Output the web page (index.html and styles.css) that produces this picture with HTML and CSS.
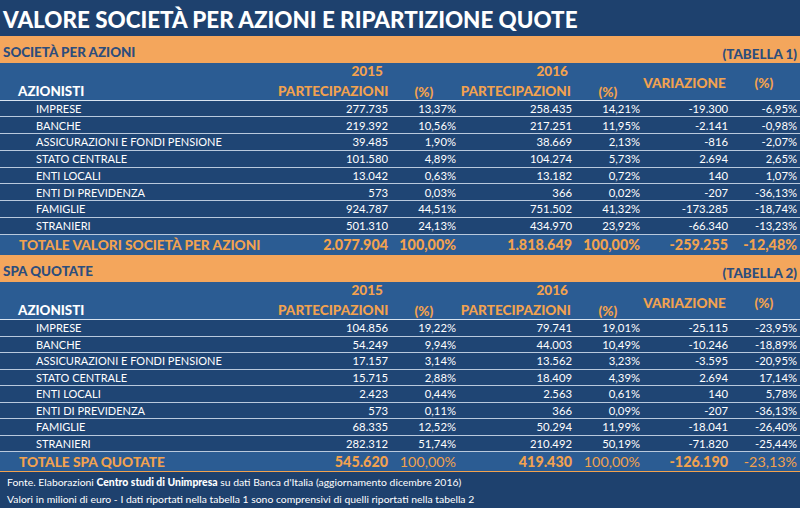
FILE: index.html
```html
<!DOCTYPE html>
<html lang="it">
<head>
<meta charset="utf-8">
<title>Valore società per azioni e ripartizione quote</title>
<link rel="stylesheet" href="styles.css">
</head>
<body>
<div class="page">
  <h1 class="title">VALORE SOCIETÀ PER AZIONI E RIPARTIZIONE QUOTE</h1>

  <div class="band"><span class="band-l">SOCIETÀ PER AZIONI</span><span class="band-r">(TABELLA 1)</span></div>
  <div class="head">
    <div class="h-az">AZIONISTI</div>
    <div class="h-year y1">2015</div>
    <div class="h-part p1">PARTECIPAZIONI</div>
    <div class="h-pct c1">(%)</div>
    <div class="h-year y2">2016</div>
    <div class="h-part p2">PARTECIPAZIONI</div>
    <div class="h-pct c2">(%)</div>
    <div class="h-var">VARIAZIONE</div>
    <div class="h-pct c3">(%)</div>
  </div>
  <div class="rows t1">
    <div class="row"><span class="lab">IMPRESE</span><span>277.735</span><span>13,37%</span><span>258.435</span><span>14,21%</span><span>-19.300</span><span>-6,95%</span></div>
    <div class="row"><span class="lab">BANCHE</span><span>219.392</span><span>10,56%</span><span>217.251</span><span>11,95%</span><span>-2.141</span><span>-0,98%</span></div>
    <div class="row"><span class="lab">ASSICURAZIONI E FONDI PENSIONE</span><span>39.485</span><span>1,90%</span><span>38.669</span><span>2,13%</span><span>-816</span><span>-2,07%</span></div>
    <div class="row"><span class="lab">STATO CENTRALE</span><span>101.580</span><span>4,89%</span><span>104.274</span><span>5,73%</span><span>2.694</span><span>2,65%</span></div>
    <div class="row"><span class="lab">ENTI LOCALI</span><span>13.042</span><span>0,63%</span><span>13.182</span><span>0,72%</span><span>140</span><span>1,07%</span></div>
    <div class="row"><span class="lab">ENTI DI PREVIDENZA</span><span>573</span><span>0,03%</span><span>366</span><span>0,02%</span><span>-207</span><span>-36,13%</span></div>
    <div class="row"><span class="lab">FAMIGLIE</span><span>924.787</span><span>44,51%</span><span>751.502</span><span>41,32%</span><span>-173.285</span><span>-18,74%</span></div>
    <div class="row"><span class="lab">STRANIERI</span><span>501.310</span><span>24,13%</span><span>434.970</span><span>23,92%</span><span>-66.340</span><span>-13,23%</span></div>
  </div>
  <div class="total t1tot"><span class="lab">TOTALE VALORI SOCIETÀ PER AZIONI</span><span>2.077.904</span><span>100,00%</span><span>1.818.649</span><span>100,00%</span><span>-259.255</span><span>-12,48%</span></div>

  <div class="band band2"><span class="band-l">SPA QUOTATE</span><span class="band-r">(TABELLA 2)</span></div>
  <div class="head">
    <div class="h-az">AZIONISTI</div>
    <div class="h-year y1">2015</div>
    <div class="h-part p1">PARTECIPAZIONI</div>
    <div class="h-pct c1">(%)</div>
    <div class="h-year y2">2016</div>
    <div class="h-part p2">PARTECIPAZIONI</div>
    <div class="h-pct c2">(%)</div>
    <div class="h-var">VARIAZIONE</div>
    <div class="h-pct c3">(%)</div>
  </div>
  <div class="rows t2">
    <div class="row"><span class="lab">IMPRESE</span><span>104.856</span><span>19,22%</span><span>79.741</span><span>19,01%</span><span>-25.115</span><span>-23,95%</span></div>
    <div class="row"><span class="lab">BANCHE</span><span>54.249</span><span>9,94%</span><span>44.003</span><span>10,49%</span><span>-10.246</span><span>-18,89%</span></div>
    <div class="row"><span class="lab">ASSICURAZIONI E FONDI PENSIONE</span><span>17.157</span><span>3,14%</span><span>13.562</span><span>3,23%</span><span>-3.595</span><span>-20,95%</span></div>
    <div class="row"><span class="lab">STATO CENTRALE</span><span>15.715</span><span>2,88%</span><span>18.409</span><span>4,39%</span><span>2.694</span><span>17,14%</span></div>
    <div class="row"><span class="lab">ENTI LOCALI</span><span>2.423</span><span>0,44%</span><span>2.563</span><span>0,61%</span><span>140</span><span>5,78%</span></div>
    <div class="row"><span class="lab">ENTI DI PREVIDENZA</span><span>573</span><span>0,11%</span><span>366</span><span>0,09%</span><span>-207</span><span>-36,13%</span></div>
    <div class="row"><span class="lab">FAMIGLIE</span><span>68.335</span><span>12,52%</span><span>50.294</span><span>11,99%</span><span>-18.041</span><span>-26,40%</span></div>
    <div class="row"><span class="lab">STRANIERI</span><span>282.312</span><span>51,74%</span><span>210.492</span><span>50,19%</span><span>-71.820</span><span>-25,44%</span></div>
  </div>
  <div class="total t2tot"><span class="lab">TOTALE SPA QUOTATE</span><span>545.620</span><span class="reg">100,00%</span><span>419.430</span><span class="reg">100,00%</span><span>-126.190</span><span class="reg">-23,13%</span></div>

  <div class="foot">
    <p>Fonte. Elaborazioni <b>Centro studi di Unimpresa</b> su dati Banca d'Italia (aggiornamento dicembre 2016)</p>
    <p>Valori in milioni di euro - I dati riportati nella tabella 1 sono comprensivi di quelli riportati nella tabella 2</p>
  </div>
</div>
</body>
</html>
```
FILE: styles.css
```css
* { box-sizing: border-box; }
html, body { margin: 0; padding: 0; }
body {
  width: 800px;
  height: 508px;
  overflow: hidden;
  background: #1e416e;
  font-family: Lato, "Open Sans", sans-serif;
  color: #ffffff;
}
.page {
  display: flex;
  flex-direction: column;
  width: 800px;
  height: 508px;
}
.title {
  margin: 0;
  height: 36px;
  background: #1e416e;
  color: #ffffff;
  font-size: 22.4px;
  font-weight: 900;
  line-height: 40px;
  padding-left: 3px;
  letter-spacing: 0;
  white-space: nowrap;
}
.band {
  height: 27px;
  background: #f4a65c;
  display: flex;
  justify-content: space-between;
  align-items: flex-end;
  padding: 0 3px 1px 3px;
  color: #2c4d7c;
  font-weight: 900;
  font-size: 13.4px;
}
.band2 { height: 28px; }
.band-l { line-height: 15px; position: relative; top: -2px; }
.band-r { line-height: 15px; }

.head {
  height: 37px;
  background: #2b5c93;
  border-bottom: 1px solid #d8e3f0;
  display: grid;
  grid-template-columns: 278px 112px 68px 116px 68px 88px 68px;
  grid-template-rows: 15px 22px;
  font-weight: 900;
  font-size: 13.6px;
  color: #f2a24f;
  box-sizing: content-box;
}
.h-az { grid-column: 1; grid-row: 2; color: #ffffff; padding-left: 18px; line-height: 16px; align-self: end; padding-bottom: 1px; font-size: 13.4px; }
.h-year { grid-row: 1; text-align: right; line-height: 16px; padding-top: 0; }
.y1 { grid-column: 2; padding-right: 7px; }
.y2 { grid-column: 4; padding-right: 6px; }
.h-part { grid-row: 2; text-align: right; line-height: 16px; align-self: end; padding-bottom: 1px; }
.p1 { grid-column: 2; padding-right: 4px; }
.p2 { grid-column: 4; padding-right: 3px; }
.h-pct { text-align: center; }
.c1 { grid-column: 3; grid-row: 2; line-height: 16px; align-self: end; }
.c2 { grid-column: 5; grid-row: 2; line-height: 16px; align-self: end; }
.h-var { grid-column: 6; grid-row: 1 / 3; align-self: center; text-align: center; padding: 4px 3px 0 0; }
.c3 { grid-column: 7; grid-row: 1 / 3; align-self: center; padding-top: 4px; }

.rows { background: #1f4574; }
.t1 .row { height: 17px; }
.t1 .row:nth-child(odd) { height: 16.5px; }
.t2 .row { height: 16.5px; }
.row, .total {
  display: grid;
  grid-template-columns: 278px 112px 68px 116px 68px 88px 68px;
  align-items: center;
}
.row {
  border-bottom: 1px solid #b9c9dd;
  font-size: 11.3px;
  color: #ffffff;
}
.row span, .total span {
  text-align: right;
  padding-right: 2px;
  white-space: nowrap;
}
.row span:last-child, .total span:last-child { padding-right: 1px; }
.row .lab, .total .lab { text-align: left; }
.row .lab { padding-left: 36px; font-size: 11px; }

.total {
  background: #2b5c93;
  color: #f2a24f;
  font-weight: 900;
  font-size: 14.3px;
}
.total .lab { padding-left: 19px; font-size: 13.7px; }
.t1tot { height: 20px; }
.t2tot { height: 20px; border-bottom: 1px solid #f2a24f; }
.total .reg { font-weight: 400; }

.foot {
  flex: 1;
  background: #1e416e;
  padding: 2px 0 0 7px;
  font-size: 10.4px;
}
.foot p { margin: 0; line-height: 17px; }
.foot b { font-weight: 900; }
```
